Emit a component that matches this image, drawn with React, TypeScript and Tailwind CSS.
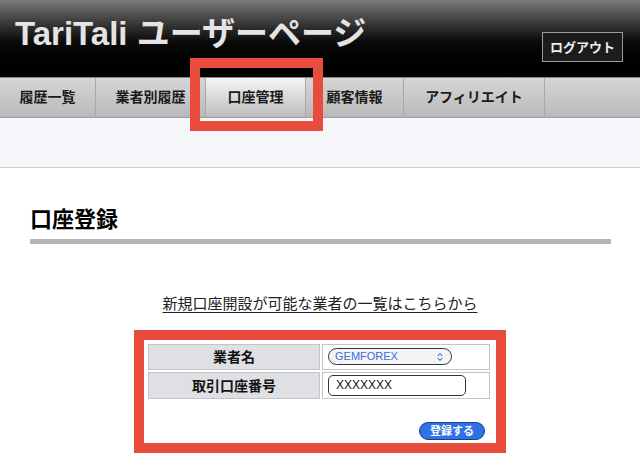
import { ChevronsUpDown } from "lucide-react";

const tabs = [
  { label: "履歴一覧", w: "w-[96px]" },
  { label: "業者別履歴", w: "w-[110px]" },
  { label: "口座管理", w: "w-[100px]", active: true },
  { label: "顧客情報", w: "w-[98px]" },
  { label: "アフィリエイト", w: "w-[141px]" },
];

const jp = "font-['Noto_Sans_CJK_JP','Noto_Sans',sans-serif]";

export default function App() {
  return (
    <div className={`relative h-[476px] w-[640px] overflow-hidden bg-white ${jp}`}>
      {/* header */}
      <header className="flex h-[77px] items-start justify-between bg-gradient-to-b from-[#7b7b7b] via-[#0a0a0a] via-55% to-black px-[15px]">
        <h1 className="mt-[14px] font-['Liberation_Sans','Noto_Sans_CJK_JP',sans-serif] text-[33px] font-bold leading-[40px] text-[#e4e4e4]">
          TariTali ユーザーページ
        </h1>
        <button className="mr-[2px] mt-[32px] h-[30px] w-[81px] border border-[#9a9a9a] bg-[#1c1c1c] text-[13px] font-bold text-[#eeeeee]">
          ログアウト
        </button>
      </header>

      {/* nav */}
      <nav className="flex h-[41px] border-t border-[#888] bg-gradient-to-b from-[#d6d6d6] to-[#b9b9b9] border-b border-b-[#9d9d9d]">
        {tabs.map((t) => (
          <div
            key={t.label}
            className={`flex ${t.w} items-center justify-center border-r border-[#a8a8a8] pb-[2px] text-[14px] font-bold text-[#1a1a1a] ${
              t.active ? "bg-gradient-to-b from-[#f6f6f6] via-[#d8d8d8] to-[#bdbdbd]" : ""
            }`}
          >
            {t.label}
          </div>
        ))}
      </nav>

      <div className="h-[50px] border-b border-[#cfcfd4] bg-[#f6f7fb]" />

      {/* content */}
      <main className="px-[30px] pt-[35px]">
        <h2 className="text-[22px] font-bold leading-[28px] text-black">口座登録</h2>
        <div className="mt-[8px] h-[5px] w-[581px] bg-[#b3b3bb]" />

        <p className="mt-[46px] text-center">
          <a className="text-[15px] text-[#222] underline underline-offset-[3px]">
            新規口座開設が可能な業者の一覧はこちらから
          </a>
        </p>

        <div className="mt-[15px] ml-[104px] w-[372px] border-[10px] border-[#e84c3d] bg-white px-[2px] pt-[2px] pb-[3px]">
          <table className="w-[346px] border-separate border-spacing-[2px]">
            <tbody>
              <tr>
                <th className="h-[26px] w-[172px] border border-[#c4c4c8] bg-[#dfe0e4] text-[14px] font-bold text-[#111]">
                  業者名
                </th>
                <td className="border border-[#c4c4c8] px-[5px]">
                  <div className="flex h-[17px] w-[124px] items-center justify-between rounded-full border border-[#333] bg-[#f4f4f6] pl-[6px] pr-[6px]">
                    <span className="font-['Liberation_Sans',sans-serif] text-[11px] text-[#3b6fd6]">GEMFOREX</span>
                    <ChevronsUpDown className="h-[10px] w-[10px] text-[#3b6fd6]" strokeWidth={2.5} />
                  </div>
                </td>
              </tr>
              <tr>
                <th className="h-[27px] border border-[#c4c4c8] bg-[#dfe0e4] text-[14px] font-bold text-[#111]">
                  取引口座番号
                </th>
                <td className="border border-[#c4c4c8] px-[5px]">
                  <div className="flex h-[21px] w-[138px] items-center rounded-[5px] border border-[#333] bg-white pl-[7px] font-['Liberation_Sans',sans-serif] text-[12px] text-[#111]">
                    XXXXXXX
                  </div>
                </td>
              </tr>
            </tbody>
          </table>
          <div className="mt-[21px] flex justify-end pr-[9px]">
            <button className="h-[18px] w-[66px] rounded-full border border-[#1e3f82] bg-[#2f72e6] text-[11px] font-bold leading-none text-white">
              登録する
            </button>
          </div>
        </div>
      </main>

      {/* annotation over active tab */}
      <div className="absolute left-[190px] top-[58px] h-[73px] w-[133px] border-[10px] border-[#e84c3d]" />
    </div>
  );
}
